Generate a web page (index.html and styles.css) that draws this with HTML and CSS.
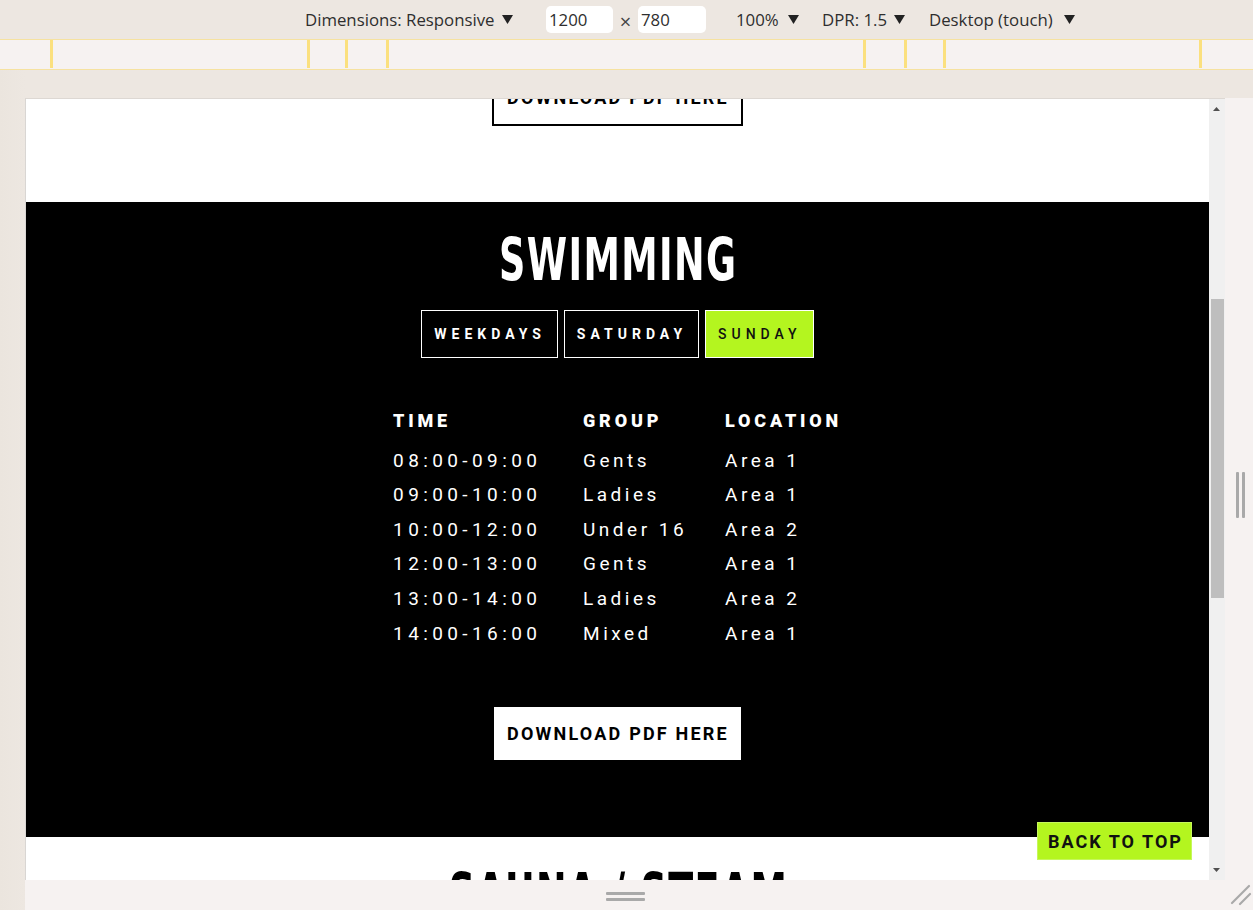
FILE: index.html
```html
<!DOCTYPE html>
<html lang="en">
<head>
<meta charset="utf-8">
<title>Swimming timetable – responsive preview</title>
<link rel="stylesheet" href="styles.css">
</head>
<body>
<div class="toolbar">
  <span class="tb-item tb-dim">Dimensions: Responsive<svg class="caret" viewBox="0 0 11 9"><polygon points="0,0 11,0 5.5,9"/></svg></span>
  <span class="tb-input tb-w">1200</span>
  <span class="tb-x">×</span>
  <span class="tb-input tb-h">780</span>
  <span class="tb-item tb-zoom">100%<svg class="caret" viewBox="0 0 11 9"><polygon points="0,0 11,0 5.5,9"/></svg></span>
  <span class="tb-item tb-dpr">DPR: 1.5<svg class="caret" viewBox="0 0 11 9"><polygon points="0,0 11,0 5.5,9"/></svg></span>
  <span class="tb-item tb-dev">Desktop (touch)<svg class="caret" viewBox="0 0 11 9"><polygon points="0,0 11,0 5.5,9"/></svg></span>
</div>
<div class="ruler">
  <i class="mark m1"></i><i class="mark m2"></i><i class="mark m3"></i><i class="mark m4"></i>
  <i class="mark m5"></i><i class="mark m6"></i><i class="mark m7"></i><i class="mark m8"></i>
</div>
<div class="stage">
  <div class="gutter"></div>
  <div class="device-col">
    <div class="device-top"></div>
    <div class="device-row">
      <div class="viewport">
        <div class="page">
          <section class="sec sec-light sec-prev">
            <a class="btn btn-outline">DOWNLOAD PDF HERE</a>
          </section>
          <section class="sec sec-dark">
            <h2 class="sec-title"><span class="sec-title-text">SWIMMING</span></h2>
            <div class="tabs">
              <button class="tab">WEEKDAYS</button>
              <button class="tab">SATURDAY</button>
              <button class="tab tab-active">SUNDAY</button>
            </div>
            <table class="timetable">
              <thead>
                <tr><th class="c-time">TIME</th><th class="c-group">GROUP</th><th>LOCATION</th></tr>
              </thead>
              <tbody>
                <tr><td class="t-time">08:00-09:00</td><td>Gents</td><td>Area 1</td></tr>
                <tr><td class="t-time">09:00-10:00</td><td>Ladies</td><td>Area 1</td></tr>
                <tr><td class="t-time">10:00-12:00</td><td>Under 16</td><td>Area 2</td></tr>
                <tr><td class="t-time">12:00-13:00</td><td>Gents</td><td>Area 1</td></tr>
                <tr><td class="t-time">13:00-14:00</td><td>Ladies</td><td>Area 2</td></tr>
                <tr><td class="t-time">14:00-16:00</td><td>Mixed</td><td>Area 1</td></tr>
              </tbody>
            </table>
            <a class="btn btn-solid">DOWNLOAD PDF HERE</a>
          </section>
          <section class="sec sec-light">
            <h2 class="sec-title"><span class="sec-title-text">SAUNA / STEAM</span></h2>
          </section>
        </div>
        <div class="scrollbar">
          <div class="sb-btn"><svg class="sb-arrow" viewBox="0 0 7 4"><polygon points="0,4 7,4 3.5,0"/></svg></div>
          <div class="sb-track"><div class="sb-thumb"></div></div>
          <div class="sb-btn sb-btn-down"><svg class="sb-arrow" viewBox="0 0 7 4"><polygon points="0,0 7,0 3.5,4"/></svg></div>
        </div>
        <a class="back-top">BACK TO TOP</a>
      </div>
      <div class="side-strip"><div class="grip-v"><i></i><i></i></div></div>
    </div>
    <div class="bottom-strip">
      <div class="bottom-grip-area"><div class="grip-h"><i></i><i></i></div></div>
      <div class="corner">
        <svg viewBox="0 0 28 30" class="corner-svg"><line x1="7" y1="23" x2="24" y2="6"/><line x1="15" y1="24" x2="25" y2="14"/></svg>
      </div>
    </div>
  </div>
</div>
</body>
</html>
```

FILE: styles.css
```css
* { box-sizing: border-box; margin: 0; padding: 0; }
html, body { width: 1253px; height: 910px; overflow: hidden; }
body {
  background: #ede7e1;
  font-family: "Open Sans", "Noto Sans", sans-serif;
  color: #2e2e2e;
}

/* ---------- devtools toolbar ---------- */
.toolbar {
  height: 39px;
  display: flex;
  align-items: center;
  padding-left: 305px;
  font-size: 16.8px;
}
.tb-item { display: flex; align-items: center; justify-content: space-between; white-space: nowrap; }
.caret { width: 11px; height: 9px; margin-left: 7px; fill: #222; flex: none; }
.tb-input {
  background: #fff;
  border-radius: 5px;
  height: 27px;
  display: flex;
  align-items: center;
  padding-left: 3px;
}
.tb-dim { width: 208px; }
.tb-w { width: 67px; margin-left: 33px; }
.tb-x { width: 25px; text-align: center; color: #444; font-size: 20px; line-height: 20px; padding-top: 4px; }
.tb-h { width: 68px; }
.tb-zoom { width: 63px; margin-left: 30px; }
.tb-dpr { width: 83px; margin-left: 23px; }
.tb-dev { width: 146px; margin-left: 24px; }

/* ---------- ruler ---------- */
.ruler {
  position: relative;
  height: 31px;
  background: #f6f2f1;
  border-top: 1px solid #f6e2a0;
  border-bottom: 1px solid #f6e2a0;
}
.mark { position: absolute; top: 0; width: 3px; height: 28px; background: #fbe07e; }
.m1 { left: 50px; } .m2 { left: 307px; } .m3 { left: 345px; } .m4 { left: 386px; }
.m5 { left: 863px; } .m6 { left: 904px; } .m7 { left: 943px; } .m8 { left: 1199px; }

/* ---------- device stage ---------- */
.stage { display: flex; height: 840px; }
.gutter { width: 25px; flex: none; background: linear-gradient(90deg, #ebe5de, #ede7e1); }
.device-col { flex: 1; display: flex; flex-direction: column; }
.device-top { height: 28px; flex: none; }
.device-row { display: flex; height: 782px; flex: none; }
.viewport {
  position: relative;
  width: 1200px;
  height: 782px;
  display: flex;
  overflow: hidden;
  background: #fff;
  border-left: 1px solid #d9d6d3;
  border-top: 1px solid #ddd8d3;
}
.side-strip {
  flex: 1;
  background: #f6f2f1;
  display: flex;
  align-items: center;
  padding-left: 11px;
  padding-top: 11px;
}
.grip-v { display: flex; gap: 3px; }
.grip-v i { display: block; width: 3px; height: 46px; background: #a9a9a9; border-radius: 1px; }
.bottom-strip { height: 30px; display: flex; background: #f6f2f1; }
.bottom-grip-area { width: 1200px; display: flex; justify-content: center; padding-top: 12px; padding-left: 1px; }
.grip-h { display: flex; flex-direction: column; gap: 3px; }
.grip-h i { display: block; width: 39px; height: 3px; background: #a9a9a9; border-radius: 1px; }
.corner { flex: 1; }
.corner-svg { display: block; width: 28px; height: 30px; }
.corner-svg line { stroke: #a9a9a9; stroke-width: 2.2; stroke-linecap: round; }

/* ---------- scrollbar ---------- */
.scrollbar { width: 16px; flex: none; background: #f0f0f0; display: flex; flex-direction: column; }
.sb-btn { height: 17px; display: flex; justify-content: center; padding-top: 8px; padding-right: 1px; flex: none; }
.sb-btn-down { padding-top: 5px; }
.sb-arrow { width: 7px; height: 4px; fill: #505050; }
.sb-track { flex: 1; }
.sb-thumb { margin: 183px 1px 0 2px; height: 299px; background: #bebebe; }

/* ---------- page ---------- */
.page { width: 1183px; flex: none; display: flex; flex-direction: column; }
.sec { text-align: center; flex: none; }
.sec-light { background: #fff; color: #000; }
.sec-dark { background: #000; color: #fff; padding: 30px 0 77px; }
.sec-prev { display: flex; flex-direction: column; align-items: center; padding-bottom: 76px; }
.sec-prev .btn { margin-top: -30px; }
.sec-light .sec-title { padding-top: 30px; }

.sec-title {
  font-family: "DejaVu Sans Condensed", "DejaVu Sans", sans-serif;
  font-weight: 700;
  font-size: 58px;
  line-height: 56px;
  height: 56px;
  white-space: nowrap;
}
.sec-title-text {
  display: inline-block;
  letter-spacing: 2px;
  margin-right: -2px;
  transform: scaleX(0.7);
}

.tabs { display: flex; justify-content: center; gap: 6px; margin-top: 22px; }
.tab {
  font-family: Roboto, "Liberation Sans", sans-serif;
  font-weight: 700;
  font-size: 14px;
  letter-spacing: 5px;
  line-height: 16px;
  padding: 15px 11px 15px 12px;
  background: #000;
  color: #fff;
  border: 1px solid #fff;
}
.tab-active { background: #b4f51f; color: #111; font-weight: 500; }

.timetable {
  margin: 46px auto 0;
  border-collapse: collapse;
  font-family: Roboto, "Liberation Sans", sans-serif;
  text-align: left;
}
.timetable th {
  font-weight: 900;
  font-size: 18px;
  letter-spacing: 3.8px;
  line-height: 34.6px;
  padding-bottom: 5px;
}
.timetable td {
  font-weight: 400;
  font-size: 19px;
  letter-spacing: 3.5px;
  line-height: 34.6px;
  padding: 0;
}
.timetable .t-time { letter-spacing: 4.4px; }
.c-time { width: 190px; }
.c-group { width: 142px; }

.btn {
  display: inline-block;
  font-family: Roboto, "Liberation Sans", sans-serif;
  font-weight: 700;
  font-size: 18px;
  line-height: 19px;
  letter-spacing: 2.2px;
  padding: 17px 12px 17px 13px;
  text-decoration: none;
}
.btn-outline { border: 2px solid #000; color: #000; }
.btn-solid { background: #fff; color: #000; margin-top: 56px; }

.back-top {
  position: absolute;
  right: 33px;
  bottom: 20px;
  width: 155px;
  height: 38px;
  display: flex;
  align-items: center;
  justify-content: center;
  background: #b4f51f;
  border: 1px solid #c6f75c;
  color: #111;
  font-family: Roboto, "Liberation Sans", sans-serif;
  font-weight: 700;
  font-size: 18px;
  letter-spacing: 2px;
  padding-left: 2px;
}
```
